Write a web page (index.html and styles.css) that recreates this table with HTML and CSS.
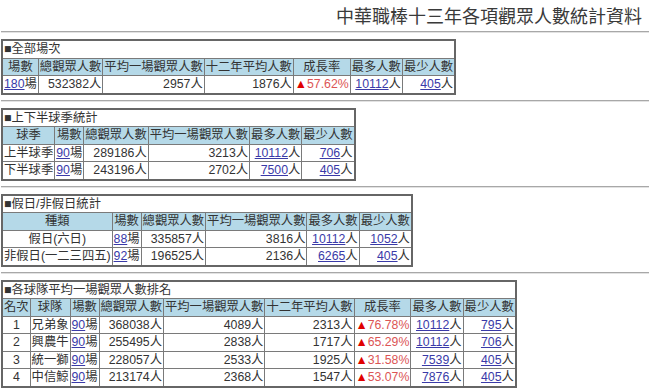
FILE: index.html
```html
<!DOCTYPE html>
<html lang="zh-Hant">
<head>
<meta charset="utf-8">
<title>中華職棒十三年各項觀眾人數統計資料</title>
<link rel="stylesheet" href="styles.css">
</head>
<body>
<div class="page">
  <h1 class="title">中華職棒十三年各項觀眾人數統計資料</h1>
  <hr class="rule">

  <table class="stat">
    <tr><td class="cap" colspan="7">■全部場次</td></tr>
    <tr class="head"><th>場數</th><th>總觀眾人數</th><th>平均一場觀眾人數</th><th>十二年平均人數</th><th>成長率</th><th>最多人數</th><th>最少人數</th></tr>
    <tr><td class="l"><a href="#">180</a>場</td><td>532382人</td><td>2957人</td><td>1876人</td><td class="gr"><span class="tri">▲</span>57.62%</td><td><a href="#">10112</a>人</td><td><a href="#">405</a>人</td></tr>
  </table>
  <hr class="rule">

  <table class="stat">
    <tr><td class="cap" colspan="6">■上下半球季統計</td></tr>
    <tr class="head"><th>球季</th><th>場數</th><th>總觀眾人數</th><th>平均一場觀眾人數</th><th>最多人數</th><th>最少人數</th></tr>
    <tr><td class="l">上半球季</td><td class="l"><a href="#">90</a>場</td><td>289186人</td><td>3213人</td><td><a href="#">10112</a>人</td><td><a href="#">706</a>人</td></tr>
    <tr><td class="l">下半球季</td><td class="l"><a href="#">90</a>場</td><td>243196人</td><td>2702人</td><td><a href="#">7500</a>人</td><td><a href="#">405</a>人</td></tr>
  </table>
  <hr class="rule">

  <table class="stat">
    <tr><td class="cap" colspan="6">■假日/非假日統計</td></tr>
    <tr class="head"><th>種類</th><th>場數</th><th>總觀眾人數</th><th>平均一場觀眾人數</th><th>最多人數</th><th>最少人數</th></tr>
    <tr><td class="c">假日(六日)</td><td class="l"><a href="#">88</a>場</td><td>335857人</td><td>3816人</td><td><a href="#">10112</a>人</td><td><a href="#">1052</a>人</td></tr>
    <tr><td class="l">非假日(一二三四五)</td><td class="l"><a href="#">92</a>場</td><td>196525人</td><td>2136人</td><td><a href="#">6265</a>人</td><td><a href="#">405</a>人</td></tr>
  </table>
  <hr class="rule">

  <table class="stat">
    <tr><td class="cap" colspan="9">■各球隊平均一場觀眾人數排名</td></tr>
    <tr class="head"><th>名次</th><th>球隊</th><th>場數</th><th>總觀眾人數</th><th>平均一場觀眾人數</th><th>十二年平均人數</th><th>成長率</th><th>最多人數</th><th>最少人數</th></tr>
    <tr><td class="c">1</td><td class="l">兄弟象</td><td class="l"><a href="#">90</a>場</td><td>368038人</td><td>4089人</td><td>2313人</td><td class="gr"><span class="tri">▲</span>76.78%</td><td><a href="#">10112</a>人</td><td><a href="#">795</a>人</td></tr>
    <tr><td class="c">2</td><td class="l">興農牛</td><td class="l"><a href="#">90</a>場</td><td>255495人</td><td>2838人</td><td>1717人</td><td class="gr"><span class="tri">▲</span>65.29%</td><td><a href="#">10112</a>人</td><td><a href="#">706</a>人</td></tr>
    <tr><td class="c">3</td><td class="l">統一獅</td><td class="l"><a href="#">90</a>場</td><td>228057人</td><td>2533人</td><td>1925人</td><td class="gr"><span class="tri">▲</span>31.58%</td><td><a href="#">7539</a>人</td><td><a href="#">405</a>人</td></tr>
    <tr><td class="c">4</td><td class="l">中信鯨</td><td class="l"><a href="#">90</a>場</td><td>213174人</td><td>2368人</td><td>1547人</td><td class="gr"><span class="tri">▲</span>53.07%</td><td><a href="#">7876</a>人</td><td><a href="#">405</a>人</td></tr>
  </table>
</div>
</body>
</html>
```

FILE: styles.css
```css
html, body {
  margin: 0;
  padding: 0;
  background: #ffffff;
}

.page {
  padding: 0 1px;
  font-family: "Liberation Sans", "Noto Sans CJK TC", sans-serif;
  color: #333333;
}

.title {
  margin: 0;
  padding: 6px 7px 0 0;
  text-align: right;
  font-size: 18px;
  line-height: 22px;
  font-weight: normal;
  color: #3a3a3a;
}

.rule {
  margin: 3px 0 6px;
  height: 0;
  border: 0;
  border-top: 1px solid #a8a8a8;
  border-bottom: 1px solid #e2e2e2;
}

.stat {
  border-collapse: collapse;
  border: 2px solid #666666;
  font-size: 12.3px;
  line-height: 16.5px;
  margin-bottom: 5px;
}

.stat th,
.stat td {
  border: 1px solid #7a7a7a;
  padding: 0 1px;
  white-space: nowrap;
  text-align: right;
  font-weight: normal;
  color: #333333;
}

.stat .head th {
  background: #b5d9e8;
  text-align: center;
}

.stat td.cap {
  text-align: left;
  background: #ffffff;
}

.stat td.l { text-align: left; }
.stat td.c { text-align: center; }

.stat a {
  color: #3a3aa8;
  text-decoration: underline;
}

.stat td.gr {
  color: #dc5555;
}

.tri {
  color: #e00000;
}
```
